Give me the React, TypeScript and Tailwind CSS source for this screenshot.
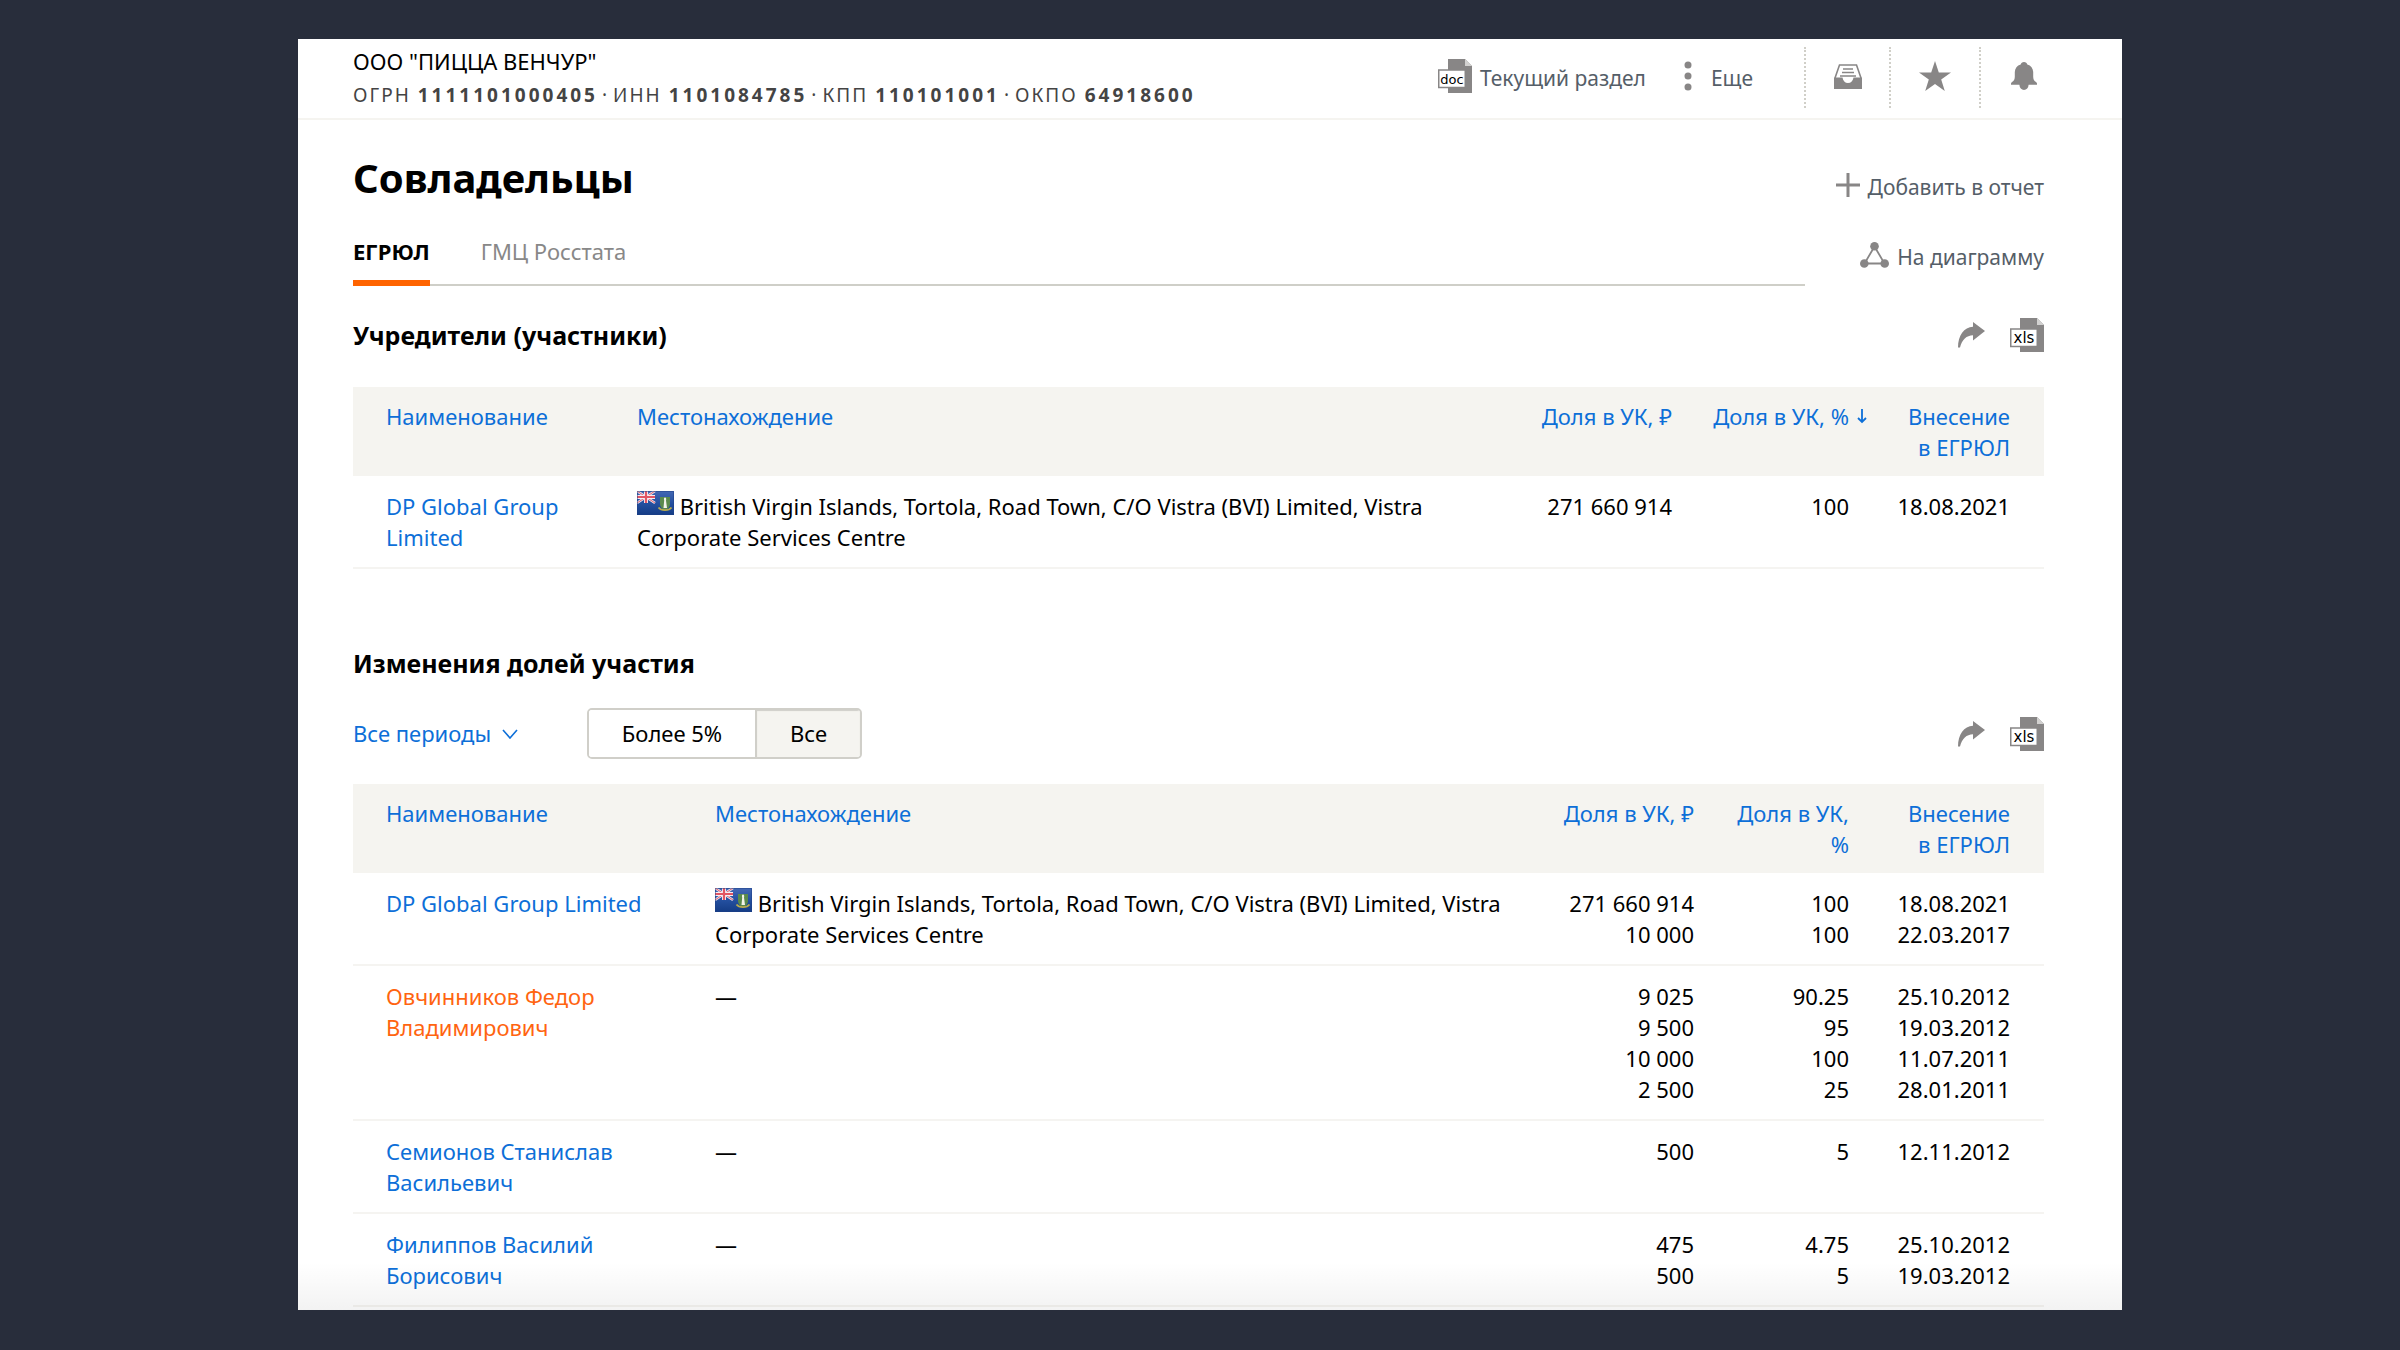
import React, { useState } from 'react';

type Owner = {
  name: string;
  accent?: boolean;
  address?: string;
  rows: { sum: string; percent: string; date: string }[];
};

const founders: Owner[] = [
  {
    name: 'DP Global Group Limited',
    address: 'British Virgin Islands, Tortola, Road Town, C/O Vistra (BVI) Limited, Vistra Corporate Services Centre',
    rows: [{ sum: '271 660 914', percent: '100', date: '18.08.2021' }],
  },
];

const changes: Owner[] = [
  {
    name: 'DP Global Group Limited',
    address: 'British Virgin Islands, Tortola, Road Town, C/O Vistra (BVI) Limited, Vistra Corporate Services Centre',
    rows: [
      { sum: '271 660 914', percent: '100', date: '18.08.2021' },
      { sum: '10 000', percent: '100', date: '22.03.2017' },
    ],
  },
  {
    name: 'Овчинников Федор Владимирович',
    accent: true,
    rows: [
      { sum: '9 025', percent: '90.25', date: '25.10.2012' },
      { sum: '9 500', percent: '95', date: '19.03.2012' },
      { sum: '10 000', percent: '100', date: '11.07.2011' },
      { sum: '2 500', percent: '25', date: '28.01.2011' },
    ],
  },
  {
    name: 'Семионов Станислав Васильевич',
    rows: [{ sum: '500', percent: '5', date: '12.11.2012' }],
  },
  {
    name: 'Филиппов Василий Борисович',
    rows: [
      { sum: '475', percent: '4.75', date: '25.10.2012' },
      { sum: '500', percent: '5', date: '19.03.2012' },
    ],
  },
];

function FileIcon({ label, size }: { label: string; size: number }) {
  return (
    <svg width="34" height="34" viewBox="0 0 34 34" className="shrink-0" aria-hidden="true">
      <path d="M10 0H27L34 7V34H10Z" fill="#888686" />
      <path d="M27 0L34 7H27Z" fill="#d2d1d0" />
      <rect x="0.75" y="11" width="26.5" height="17.5" fill="#fff" stroke="#888686" strokeWidth="1.5" />
      <text x="14" y="25" textAnchor="middle" fontSize={size} fontFamily="DejaVu Sans, sans-serif" fill="#000">
        {label}
      </text>
    </svg>
  );
}

function ShareIcon() {
  return (
    <svg width="27" height="26" viewBox="0 0 27 26" aria-hidden="true">
      <path d="M15 0L27 9L15 18.5V13.2C8.5 13.4 4 17.500 2 25.500H0C0 13.500 6 5.300 15 4.800Z" fill="#888686" />
    </svg>
  );
}

function InboxIcon() {
  return (
    <svg width="28" height="25" viewBox="0 0 28 25" fill="none" aria-hidden="true">
      <path d="M1 14L5.500 1H22.500L27 14" stroke="#888686" strokeWidth="1.6" />
      <path d="M9 5H19M8 8.500H20M6 12H22" stroke="#888686" strokeWidth="1.5" />
      <path d="M0 13.500H8.500C9 17 11 19 14 19S19 17 19.500 13.500H28V25H0Z" fill="#888686" />
    </svg>
  );
}

function StarIcon() {
  return (
    <svg width="32" height="30" viewBox="0 0 32 30" aria-hidden="true">
      <path d="M16 0L19.800 11.500H32L22.200 18.600L25.800 30L16 23L6.200 30L9.800 18.600L0 11.500H12.200Z" fill="#888686" />
    </svg>
  );
}

function BellIcon() {
  return (
    <svg width="26" height="28" viewBox="0 0 26 28" aria-hidden="true">
      <path
        d="M13 0C14.800 0 16 1 16.300 2.400C20 3.400 22 6.200 22.200 10V15C22.400 18 23.400 18.800 25 20C26 20.900 26.200 22 26 22.800H17.600C17.400 26 15.600 28 13 28S8.600 26 8.400 22.800H0C-0.200 22 0 20.900 1 20C2.600 18.800 3.600 18 3.800 15V10C4 6.200 6 3.400 9.700 2.400C10 1 11.200 0 13 0Z"
        fill="#888686"
      />
    </svg>
  );
}

function DotsIcon() {
  return (
    <svg width="8" height="30" viewBox="0 0 8 30" fill="#888686" className="mb-1" aria-hidden="true">
      <circle cx="4" cy="4" r="3.500" />
      <circle cx="4" cy="15" r="3.500" />
      <circle cx="4" cy="26" r="3.500" />
    </svg>
  );
}

function PlusIcon() {
  return (
    <svg width="24" height="24" viewBox="0 0 24 24" stroke="#888686" strokeWidth="3" className="mb-1" aria-hidden="true">
      <path d="M12 0V24M0 12H24" />
    </svg>
  );
}

function GraphIcon() {
  return (
    <svg width="29" height="26" viewBox="0 0 29 26" className="mb-1" aria-hidden="true">
      <path d="M14.500 4.500L4.500 21.500H24.500Z" fill="none" stroke="#888686" strokeWidth="1.8" />
      <g fill="#888686">
        <circle cx="14.500" cy="4.300" r="4.300" />
        <circle cx="4.300" cy="21.500" r="4.300" />
        <circle cx="24.700" cy="21.500" r="4.300" />
      </g>
    </svg>
  );
}

function FlagBVI() {
  return (
    <svg width="37" height="24" viewBox="0 0 37 24" className="inline-block align-baseline" role="img" aria-label="BVI">
      <defs>
        <linearGradient id="sea" x1="0" y1="0" x2="0" y2="1">
          <stop offset="0" stopColor="#4468b4" />
          <stop offset="0.5" stopColor="#2450a0" />
          <stop offset="1" stopColor="#143c85" />
        </linearGradient>
      </defs>
      <rect width="37" height="24" fill="url(#sea)" />
      <path d="M0 0L18 12M18 0L0 12" stroke="#e9e4f0" strokeWidth="2.600" />
      <path d="M0 0L18 12M18 0L0 12" stroke="#e2606c" strokeWidth="1" />
      <path d="M9 0V12M0 6H18" stroke="#f6eef4" strokeWidth="4" />
      <path d="M9 0V12M0 6H18" stroke="#e25563" strokeWidth="2.200" />
      <path d="M23 6H33V13C33 16 31 18 28 19C25 18 23 16 23 13Z" fill="#5a8a4c" />
      <path d="M28 6.500C29.500 6.500 29.300 8.500 29 9.500L30 17H26.500L27.200 9.500C26.800 8 26.800 6.500 28 6.500Z" fill="#f3f3ea" />
      <path d="M21.500 16.500C24 20 32 20 34.500 16.500" fill="none" stroke="#b8ac4c" strokeWidth="1.800" />
      <path d="M0.500 23.500V0.500H36.500V23.500Z" fill="none" stroke="#1d3f86" strokeOpacity="0.5" />
    </svg>
  );
}

function ExportTools() {
  return (
    <div className="flex items-center gap-[25px]">
      <button type="button" aria-label="Поделиться">
        <ShareIcon />
      </button>
      <button type="button" aria-label="Скачать xls">
        <FileIcon label="xls" size={15} />
      </button>
    </div>
  );
}

function OwnersTable({ owners, variant }: { owners: Owner[]; variant: 'founders' | 'changes' }) {
  const isFounders = variant === 'founders';
  const head = 'pt-[14px] pb-[13px] pl-[33px] font-normal';
  const cell = 'pt-[15px] pb-[14px] pl-[33px]';
  return (
    <table className="w-full table-fixed border-collapse text-[22px] leading-[31px]">
      <colgroup>
        <col className={isFounders ? 'w-[251px]' : 'w-[329px]'} />
        <col />
        <col className="w-[168px]" />
        <col className={isFounders ? 'w-[177px]' : 'w-[155px]'} />
        <col className="w-[195px]" />
      </colgroup>
      <thead className="bg-[#f5f4f0] text-[#0d6fd8]">
        <tr className="align-top">
          <th className={`${head} text-left`}>
            <button type="button">Наименование</button>
          </th>
          <th className={`${head} text-left`}>
            <button type="button">Местонахождение</button>
          </th>
          <th className={`${head} text-right whitespace-nowrap`}>
            <button type="button">Доля в УК, ₽</button>
          </th>
          <th className={`${head} text-right`}>
            {isFounders ? (
              <button type="button" className="relative whitespace-nowrap">
                Доля в УК, %
                <svg width="10" height="16" viewBox="0 0 10 16" className="absolute top-2 left-full ml-2" fill="none" stroke="currentColor" strokeWidth="1.800" aria-hidden="true">
                  <path d="M5 0V13M1 9L5 13L9 9" />
                </svg>
              </button>
            ) : (
              <button type="button" className="text-right">
                Доля в УК, %
              </button>
            )}
          </th>
          <th className={`${head} pr-[34px] text-right`}>
            <button type="button" className="text-right">
              Внесение в&nbsp;ЕГРЮЛ
            </button>
          </th>
        </tr>
      </thead>
      <tbody>
        {owners.map((o) => (
          <tr key={o.name} className="border-b-2 border-[#f5f4f1] align-top">
            <td className={cell}>
              <a href="#" className={o.accent ? 'text-[#ff6410]' : 'text-[#0d6fd8]'}>
                {o.name}
              </a>
            </td>
            <td className={cell}>
              {o.address ? (
                <>
                  <FlagBVI /> {o.address}
                </>
              ) : (
                '—'
              )}
            </td>
            <td className={`${cell} text-right`}>
              {o.rows.map((r) => (
                <div key={r.date}>{r.sum}</div>
              ))}
            </td>
            <td className={`${cell} text-right`}>
              {o.rows.map((r) => (
                <div key={r.date}>{r.percent}</div>
              ))}
            </td>
            <td className={`${cell} pr-[34px] text-right`}>
              {o.rows.map((r) => (
                <div key={r.date}>{r.date}</div>
              ))}
            </td>
          </tr>
        ))}
      </tbody>
    </table>
  );
}

const requisites = [
  ['ОГРН', '1111101000405'],
  ['ИНН', '1101084785'],
  ['КПП', '110101001'],
  ['ОКПО', '64918600'],
];

export default function App() {
  const [tab, setTab] = useState('ЕГРЮЛ');
  const [filter, setFilter] = useState('Все');

  return (
    <div className="min-h-screen bg-[#282d3b] pt-[39px] pr-[278px] pb-10 pl-[298px] font-['Noto_Sans',sans-serif] text-black">
      <div className="relative bg-white pb-[3px]">
        <header className="flex items-start justify-between border-b-2 border-[#f5f4f0] pr-[55px] pl-[55px]">
          <div className="pt-[5px] pb-[6px] leading-[34px]">
            <div className="text-[22px]">ООО "ПИЦЦА ВЕНЧУР"</div>
            <div className="text-[19px] tracking-[2px] text-[#444]">
              {requisites.map(([label, value], i) => (
                <React.Fragment key={label}>
                  {i > 0 && <span className="mx-1">·</span>}
                  {label} <b className="tracking-[3px]">{value}</b>
                </React.Fragment>
              ))}
            </div>
          </div>
          <div className="flex items-center pt-2 text-[21px] leading-[30px] text-[#555e68]">
            <button type="button" className="flex items-end gap-2 pb-1">
              <FileIcon label="doc" size={13} />
              Текущий раздел
            </button>
            <button type="button" className="ml-[38px] flex items-center gap-[19px]">
              <DotsIcon />
              Еще
            </button>
            <button type="button" aria-label="Входящие" className="ml-[51px] flex h-[61px] w-[85px] items-center justify-center border-l-2 border-dotted border-[#d0cfc8] pb-[3px]">
              <InboxIcon />
            </button>
            <button type="button" aria-label="Избранное" className="flex h-[61px] w-[90px] items-center justify-center border-l-2 border-dotted border-[#d0cfc8] pb-[3px]">
              <StarIcon />
            </button>
            <button type="button" aria-label="Уведомления" className="flex h-[61px] w-[88px] items-center justify-center border-l-2 border-dotted border-[#d0cfc8] pb-[3px]">
              <BellIcon />
            </button>
          </div>
        </header>

        <main className="pr-[78px] pl-[55px]">
          <div className="flex pt-[33px]">
            <div className="flex-1">
              <h1 className="text-[40px] leading-[50px] font-bold">Совладельцы</h1>
              <div role="tablist" className="mt-[30px] flex gap-[51px] border-b-2 border-[#cfcfc8] text-[22px] leading-9">
                {['ЕГРЮЛ', 'ГМЦ Росстата'].map((t) => (
                  <button
                    key={t}
                    type="button"
                    role="tab"
                    aria-selected={tab === t}
                    onClick={() => setTab(t)}
                    className={
                      tab === t
                        ? '-mb-[2px] border-b-[6px] border-[#ff6400] pb-[11px] font-bold'
                        : '-mb-[2px] border-b-[6px] border-transparent pb-[11px] text-[#888]'
                    }
                  >
                    {t}
                  </button>
                ))}
              </div>
            </div>
            <div className="flex w-[239px] flex-col items-end gap-10 pt-[19px] text-[21px] leading-[30px] text-[#555e68]">
              <button type="button" className="flex items-center gap-2 whitespace-nowrap">
                <PlusIcon />
                Добавить в отчет
              </button>
              <button type="button" className="flex items-center gap-2 whitespace-nowrap">
                <GraphIcon />
                На диаграмму
              </button>
            </div>
          </div>

          <section>
            <div className="flex items-center justify-between pt-[31px] pb-[34px]">
              <h2 className="text-[25px] leading-9 font-bold">Учредители (участники)</h2>
              <ExportTools />
            </div>
            <OwnersTable owners={founders} variant="founders" />
          </section>

          <section className="pt-[76px]">
            <h2 className="text-[25px] leading-9 font-bold">Изменения долей участия</h2>
            <div className="flex items-center justify-between pt-[27px] pb-[25px]">
              <div className="flex items-center text-[22px]">
                <button type="button" className="flex w-[234px] items-center gap-[11px] text-[#0d6fd8]">
                  Все периоды
                  <svg width="16" height="10" viewBox="0 0 16 10" fill="none" stroke="currentColor" strokeWidth="1.600" aria-hidden="true">
                    <path d="M1 1L8 9L15 1" />
                  </svg>
                </button>
                <div className="flex overflow-hidden rounded-[5px] border-2 border-[#d0cfc9] leading-[47px]">
                  {['Более 5%', 'Все'].map((f, i) => (
                    <button
                      key={f}
                      type="button"
                      aria-pressed={filter === f}
                      onClick={() => setFilter(f)}
                      className={`${i === 0 ? 'w-[166px]' : 'w-[105px] border-l-2 border-[#d0cfc9]'} ${
                        filter === f ? 'bg-[#f5f4f0] shadow-[inset_0_1px_1px_#d0cfc9]' : 'bg-white'
                      }`}
                    >
                      {f}
                    </button>
                  ))}
                </div>
              </div>
              <ExportTools />
            </div>
            <OwnersTable owners={changes} variant="changes" />
          </section>
        </main>
        <div className="pointer-events-none absolute inset-x-0 bottom-0 h-12 bg-gradient-to-b from-transparent to-black/5" />
      </div>
    </div>
  );
}
